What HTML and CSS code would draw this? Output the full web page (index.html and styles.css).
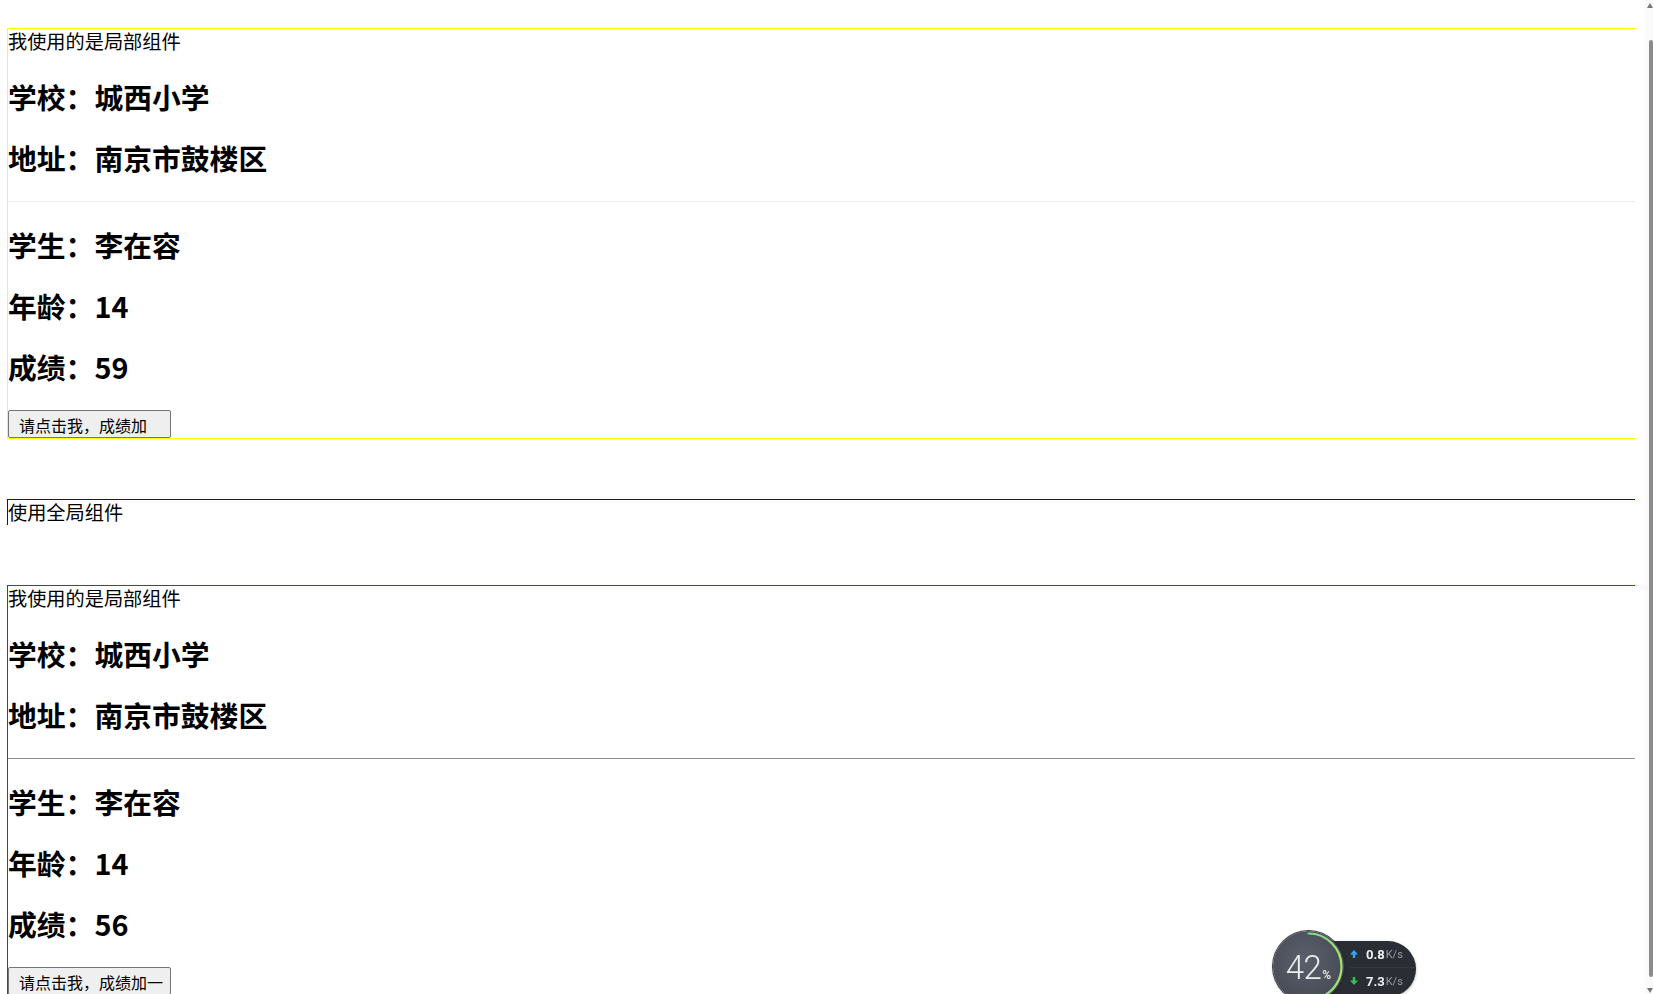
FILE: index.html
```html
<!DOCTYPE html>
<html lang="zh-CN">
<head>
<meta charset="utf-8">
<title>组件</title>
<link rel="stylesheet" href="styles.css">
</head>
<body>
<div class="page">
  <main class="content">
    <section class="box box-yellow">
      <p class="line">我使用的是局部组件</p>
      <h2 class="title">学校：城西小学</h2>
      <h2 class="title">地址：南京市鼓楼区</h2>
      <hr class="rule rule-light">
      <h2 class="title">学生：李在容</h2>
      <h2 class="title">年龄：14</h2>
      <h2 class="title">成绩：59</h2>
      <button class="btn" type="button">请点击我，成绩加</button>
    </section>

    <section class="box box-blue">
      <p class="line">使用全局组件</p>
    </section>

    <section class="box box-red">
      <p class="line">我使用的是局部组件</p>
      <h2 class="title">学校：城西小学</h2>
      <h2 class="title">地址：南京市鼓楼区</h2>
      <hr class="rule rule-dark">
      <h2 class="title">学生：李在容</h2>
      <h2 class="title">年龄：14</h2>
      <h2 class="title">成绩：56</h2>
      <button class="btn" type="button">请点击我，成绩加一</button>
    </section>
  </main>

  <div class="scrollbar">
    <svg class="sb-arrow" width="6" height="5" viewBox="0 0 6 5"><polygon points="3,0 6,5 0,5" fill="#777"/></svg>
    <div class="sb-thumb"></div>
    <svg class="sb-arrow" width="6" height="5" viewBox="0 0 6 5"><polygon points="0,0 6,0 3,5" fill="#777"/></svg>
  </div>
</div>

<div class="netmon">
  <div class="dial">
    <svg class="dial-arc" width="71" height="71" viewBox="0 0 71 71">
      <defs>
        <linearGradient id="arcg" x1="0" y1="0" x2="0" y2="1">
          <stop offset="0" stop-color="#3fd3c6"/>
          <stop offset="1" stop-color="#a6e36a"/>
        </linearGradient>
      </defs>
      <circle cx="35.5" cy="35.5" r="33" fill="none" stroke="url(#arcg)" stroke-width="2.2"
              stroke-dasharray="87 300" transform="rotate(-90 35.5 35.5)" stroke-linecap="round"/>
    </svg>
    <span class="dial-num">42</span><span class="dial-pct">%</span>
  </div>
  <div class="pill">
    <div class="pill-row">
      <svg class="pill-icon" width="8" height="8" viewBox="0 0 8 8"><path d="M4 0 L8 4.5 L5.2 4.5 L5.2 8 L2.8 8 L2.8 4.5 L0 4.5 Z" fill="#3aa3f0"/></svg>
      <span class="pill-val">0.8</span><span class="pill-unit">K/s</span>
    </div>
    <div class="pill-row pill-row-2">
      <svg class="pill-icon" width="8" height="8" viewBox="0 0 8 8"><path d="M4 8 L8 3.5 L5.2 3.5 L5.2 0 L2.8 0 L2.8 3.5 L0 3.5 Z" fill="#35c255"/></svg>
      <span class="pill-val">7.3</span><span class="pill-unit">K/s</span>
    </div>
  </div>
</div>
</body>
</html>
```

FILE: styles.css
```css
html, body {
  margin: 0;
  padding: 0;
  height: 100%;
  overflow: hidden;
  background: #ffffff;
}

body {
  font-family: "Noto Sans CJK SC", "Microsoft YaHei", sans-serif;
  color: #000;
}

.page {
  display: flex;
  height: 994px;
  overflow: hidden;
}

.content {
  flex: 1;
  min-width: 0;
  padding: 28px 10px 0 7px;
}

.box {
  border-left: 1px solid;
}

.box-yellow {
  border-color: #ffff00;
  border-top: 1px solid #ffff00;
  border-bottom: 1px solid #ffff00;
}

.box-blue {
  border-color: #0000ee;
  border-top: 1px solid #0000ee;
  margin: 60px 0;
}

.box-red {
  border-color: #ee0000;
  border-top: 1px solid #ee0000;
}

.line {
  margin: 0;
  font-size: 19.2px;
  line-height: 25px;
}

.title {
  margin: 25px 0;
  font-size: 28.8px;
  line-height: 36px;
  font-weight: 700;
}

.rule {
  margin: 25px 0;
  height: 0;
  border: 0;
  border-top: 1px solid;
}

.rule-light { border-top-color: #ebebeb; }
.rule-dark { border-top-color: #8e8e8e; }

.btn {
  display: block;
  margin: 25px 0 0 0;
  width: 163px;
  height: 28px;
  padding: 2px 0 0 10px;
  text-align: left;
  font-family: "Noto Sans CJK SC", "Microsoft YaHei", sans-serif;
  font-size: 16px;
  line-height: 22px;
  color: #000;
  background: #efefef;
  border: 1px solid #767676;
  border-radius: 2px;
  white-space: nowrap;
  overflow: hidden;
}

/* fake overlay scrollbar */
.scrollbar {
  width: 8px;
  background: #fafafa;
  display: flex;
  flex-direction: column;
  align-items: flex-end;
}

.sb-arrow {
  display: block;
  flex: none;
}

.sb-arrow:first-child { margin-top: 3px; }
.sb-arrow:last-child { margin-bottom: 1px; }

.sb-thumb {
  flex: 1;
  width: 4px;
  margin: 32px 0 11px 0;
  background: #8b8b8b;
  border-radius: 2px;
}

/* network monitor widget */
.netmon {
  position: fixed;
  left: 1273px;
  top: 931px;
  display: flex;
  align-items: flex-start;
  font-family: Roboto, "Open Sans", sans-serif;
}

.dial {
  position: relative;
  z-index: 2;
  width: 71px;
  height: 71px;
  border-radius: 50%;
  background: radial-gradient(circle at 45% 40%, #5a5f6b 0%, #4b4f5a 60%, #40444d 100%);
  box-shadow: 0 0 0 1px rgba(40, 43, 50, 0.9), 0 1px 3px rgba(0, 0, 0, 0.35);
  display: flex;
  align-items: baseline;
  justify-content: center;
  padding-top: 18px;
  box-sizing: border-box;
}

.dial-arc {
  position: absolute;
  left: 0;
  top: 0;
}

.dial-num {
  font-size: 33px;
  font-weight: 300;
  line-height: 38px;
  color: #ededed;
  letter-spacing: -0.5px;
}

.dial-pct {
  font-size: 12px;
  font-weight: 700;
  color: #e0e0e0;
  margin-left: 1px;
}

.pill {
  margin: 10px 0 0 -40px;
  width: 112px;
  height: 56px;
  box-sizing: border-box;
  padding-left: 46px;
  border-radius: 0 28px 28px 0;
  background: #2a2d34;
  box-shadow: 0 1px 3px rgba(0, 0, 0, 0.3);
  z-index: 1;
}

.pill-row {
  height: 26px;
  display: flex;
  align-items: center;
}

.pill-row-2 {
  border-top: 1px solid #363940;
}

.pill-icon {
  flex: none;
  margin-right: 8px;
}

.pill-val {
  font-size: 13px;
  font-weight: 700;
  color: #f0f0f0;
}

.pill-unit {
  font-size: 11px;
  color: #9a9da4;
  margin-left: 1px;
}
```
